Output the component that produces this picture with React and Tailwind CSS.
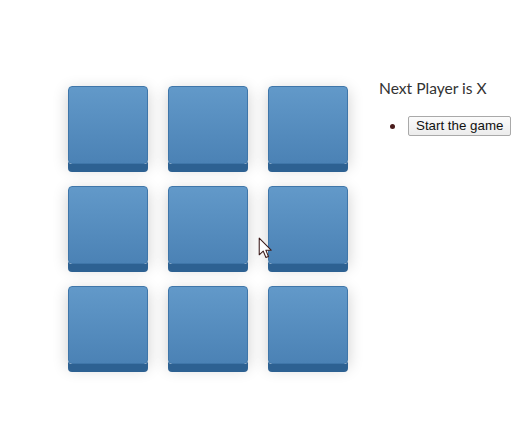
import React from 'react';

const Square = () => (
  <button className="w-20 h-[78px] rounded-[4px] border border-[#3f76a9] bg-gradient-to-b from-[#6299c9] to-[#4b82b5] shadow-[0_8px_0_#2d6192,0_4px_16px_rgba(0,0,0,0.2)]" />
);

const Cursor = () => (
  <svg
    className="absolute left-[258px] top-[237px]"
    width="15"
    height="23"
    viewBox="0 0 14 22"
  >
    <path
      d="M1 1 L1 17 L4.8 13.4 L7.4 19.6 L9.8 18.6 L7.3 12.6 L12.4 12.6 Z"
      fill="#fff"
      stroke="#3a1a1a"
      strokeWidth="1"
      strokeLinejoin="round"
    />
  </svg>
);

export default function App() {
  return (
    <div className="relative w-[529px] h-[447px] bg-white pt-[76px] pl-[68px]">
      <div className="flex items-start">
        {/* Board */}
        <div className="mt-[10px] grid grid-cols-3 gap-x-5 gap-y-[22px]">
          {Array.from({ length: 9 }).map((_, i) => (
            <Square key={i} />
          ))}
        </div>

        {/* Info */}
        <div className="ml-[31px]">
          <div className="text-[15.6px] leading-6 text-[#333] font-['Lato',sans-serif]">
            Next Player is X
          </div>
          <div className="mt-4 flex items-center">
            <span className="ml-[11px] w-[5px] h-[5px] rounded-full bg-[#4a1c1c]" />
            <button className="ml-[13px] h-5 px-[7px] border border-[#a9a9a9] rounded-[2px] bg-gradient-to-b from-[#fbfbfb] to-[#ececec] text-[13.33px] leading-none text-[#111] font-['Liberation_Sans',Arial,sans-serif]">
              Start the game
            </button>
          </div>
        </div>
      </div>
      <Cursor />
    </div>
  );
}
